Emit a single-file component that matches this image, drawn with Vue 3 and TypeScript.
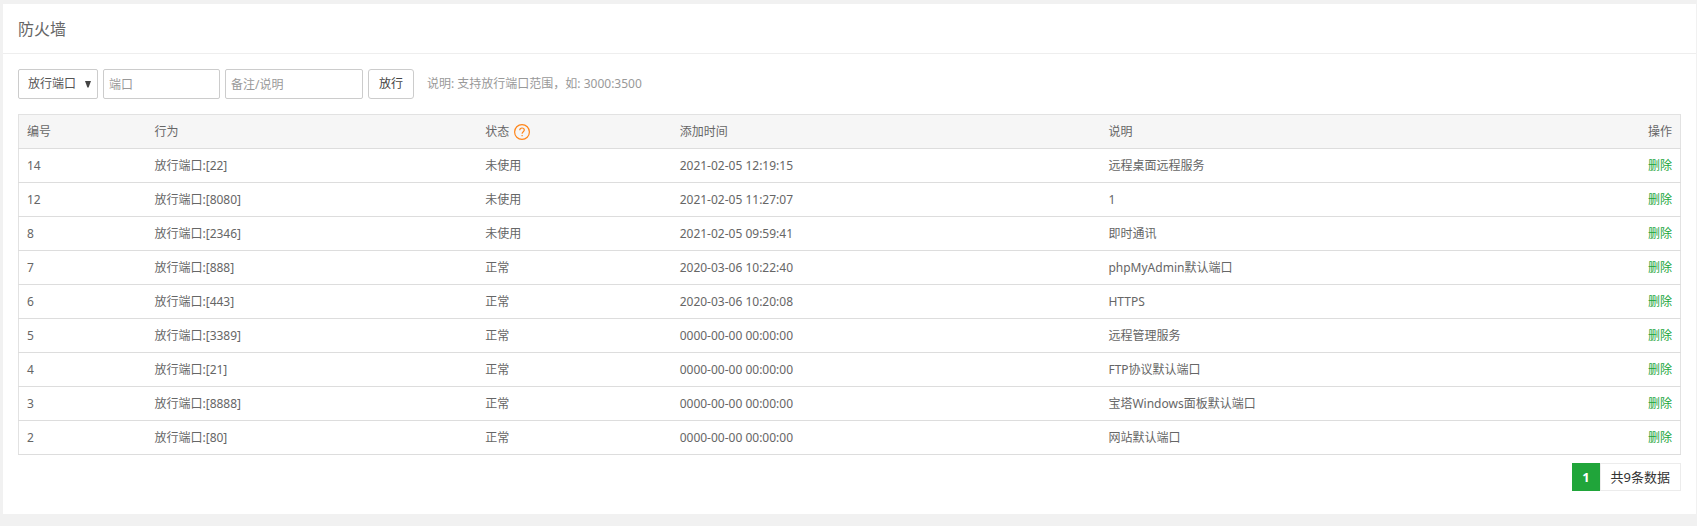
<script setup lang="ts">
import { ref } from 'vue'

interface Rule {
  id: number
  action: string
  status: string
  time: string
  note: string
}

const kind = ref('port')
const port = ref('')
const remark = ref('')

const rules: Rule[] = [
  { id: 14, action: '放行端口:[22]', status: '未使用', time: '2021-02-05 12:19:15', note: '远程桌面远程服务' },
  { id: 12, action: '放行端口:[8080]', status: '未使用', time: '2021-02-05 11:27:07', note: '1' },
  { id: 8, action: '放行端口:[2346]', status: '未使用', time: '2021-02-05 09:59:41', note: '即时通讯' },
  { id: 7, action: '放行端口:[888]', status: '正常', time: '2020-03-06 10:22:40', note: 'phpMyAdmin默认端口' },
  { id: 6, action: '放行端口:[443]', status: '正常', time: '2020-03-06 10:20:08', note: 'HTTPS' },
  { id: 5, action: '放行端口:[3389]', status: '正常', time: '0000-00-00 00:00:00', note: '远程管理服务' },
  { id: 4, action: '放行端口:[21]', status: '正常', time: '0000-00-00 00:00:00', note: 'FTP协议默认端口' },
  { id: 3, action: '放行端口:[8888]', status: '正常', time: '0000-00-00 00:00:00', note: '宝塔Windows面板默认端口' },
  { id: 2, action: '放行端口:[80]', status: '正常', time: '0000-00-00 00:00:00', note: '网站默认端口' },
]
</script>

<template>
  <main class="panel">
    <h1 class="title">防火墙</h1>
    <div class="content">
      <form class="tools" @submit.prevent>
        <div class="select-wrap">
          <select v-model="kind" class="control kind" aria-label="类型">
            <option value="port">放行端口</option>
            <option value="ip">屏蔽IP</option>
          </select>
          <svg class="arrow" viewBox="0 0 6 7" aria-hidden="true"><path d="M0 0h6L3.6 6.4H2.4z" /></svg>
        </div>
        <input v-model="port" class="control port" type="text" placeholder="端口" aria-label="端口" />
        <input v-model="remark" class="control remark" type="text" placeholder="备注/说明" aria-label="备注/说明" />
        <button class="control submit" type="submit">放行</button>
        <span class="hint">说明: 支持放行端口范围，如: 3000:3500</span>
      </form>

      <table class="rules">
        <colgroup>
          <col class="col-id" />
          <col class="col-action" />
          <col class="col-status" />
          <col class="col-time" />
          <col />
          <col class="col-op" />
        </colgroup>
        <thead>
          <tr>
            <th>编号</th>
            <th>行为</th>
            <th>
              <span class="status-head">
                状态
                <a class="help" href="#" aria-label="帮助">
                  <svg viewBox="0 0 16 16" aria-hidden="true">
                    <circle cx="8" cy="8" r="7.4" />
                    <path d="M5.7 6.2C5.8 4.8 6.7 4 8 4s2.3.8 2.3 2c0 1.7-2.2 1.8-2.2 3.8M8.1 10.9v1.3" />
                  </svg>
                </a>
              </span>
            </th>
            <th>添加时间</th>
            <th>说明</th>
            <th class="op">操作</th>
          </tr>
        </thead>
        <tbody>
          <tr v-for="rule in rules" :key="rule.id">
            <td>{{ rule.id }}</td>
            <td>{{ rule.action }}</td>
            <td>{{ rule.status }}</td>
            <td>{{ rule.time }}</td>
            <td>{{ rule.note }}</td>
            <td class="op"><a class="remove" href="#">删除</a></td>
          </tr>
        </tbody>
      </table>

      <nav class="pager" aria-label="分页">
        <span class="current" aria-current="page">1</span>
        <span class="total">共{{ rules.length }}条数据</span>
      </nav>
    </div>
  </main>
</template>

<style>
body {
  margin: 0;
  background: #f1f1f1;
}
</style>

<style scoped>
.panel {
  margin: 4px 1px 12px 3px;
  background: #fff;
  color: #666;
  font-family: "Noto Sans", "Noto Sans CJK SC", sans-serif;
  font-size: 12px;
  line-height: 18px;
}

.title {
  margin: 0;
  padding: 1px 15px 0;
  border-bottom: 1px solid #eee;
  font-size: 16px;
  font-weight: 400;
  line-height: 48px;
}

.content {
  padding: 15px 15px 23px;
}

.tools {
  display: flex;
  align-items: center;
  gap: 5px;
  margin-bottom: 15px;
}

.control {
  box-sizing: border-box;
  height: 30px;
  margin: 0;
  padding: 0 5px;
  border: 1px solid #ccc;
  border-radius: 2px;
  background: #fff;
  color: #555;
  font: inherit;
}

.control::placeholder {
  color: #999;
  opacity: 1;
}

.select-wrap {
  display: grid;
  align-items: center;
  width: 80px;
}

.kind {
  grid-area: 1 / 1;
  width: 100%;
  padding: 0 9px;
  appearance: none;
}

.arrow {
  grid-area: 1 / 1;
  justify-self: end;
  width: 6px;
  height: 7px;
  margin-right: 7px;
  fill: #444;
  pointer-events: none;
}

.port {
  width: 117px;
}

.remark {
  width: 138px;
}

.submit {
  width: 46px;
  border-radius: 3px;
  color: #444;
}

.hint {
  margin-left: 8px;
  color: #999;
}

.rules {
  width: 100%;
  border: 1px solid #e2e2e2;
  border-collapse: collapse;
  table-layout: fixed;
}

.rules th,
.rules td {
  height: 33px;
  padding: 0 8px;
  border-bottom: 1px solid #ddd;
  font-weight: 400;
  text-align: left;
}

.rules th {
  background: #f6f6f6;
}

.rules .op {
  text-align: right;
}

.col-id {
  width: 7.7%;
}

.col-action {
  width: 19.9%;
}

.col-status {
  width: 11.7%;
}

.col-time {
  width: 25.8%;
}

.col-op {
  width: 5%;
}

.status-head {
  display: flex;
  align-items: center;
  gap: 5px;
}

.help {
  display: block;
  width: 16px;
  height: 16px;
}

.help svg {
  display: block;
  fill: none;
  stroke: #ff8519;
  stroke-width: 1.2;
}

.remove {
  color: #20a53a;
  text-decoration: none;
}

.pager {
  display: flex;
  justify-content: flex-end;
  margin-top: 8px;
  font-size: 13px;
  line-height: 26px;
}

.current {
  padding: 1px 10px;
  background: #20a53a;
  color: #fff;
  font-weight: 700;
}

.total {
  padding: 0 10px;
  border: 1px solid #ececec;
  color: #333;
}
</style>
